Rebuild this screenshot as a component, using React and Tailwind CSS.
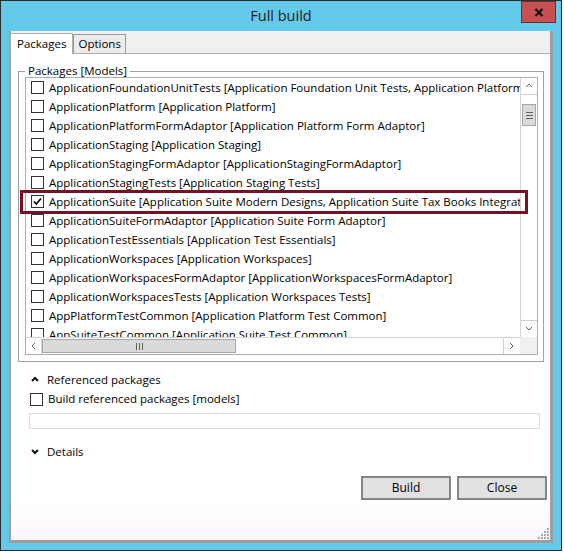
import React from 'react';

const packages = [
  ['ApplicationFoundationUnitTests', 'Application Foundation Unit Tests, Application Platform Foundation'],
  ['ApplicationPlatform', 'Application Platform'],
  ['ApplicationPlatformFormAdaptor', 'Application Platform Form Adaptor'],
  ['ApplicationStaging', 'Application Staging'],
  ['ApplicationStagingFormAdaptor', 'ApplicationStagingFormAdaptor'],
  ['ApplicationStagingTests', 'Application Staging Tests'],
  ['ApplicationSuite', 'Application Suite Modern Designs, Application Suite Tax Books Integration, Application Suite', true],
  ['ApplicationSuiteFormAdaptor', 'Application Suite Form Adaptor'],
  ['ApplicationTestEssentials', 'Application Test Essentials'],
  ['ApplicationWorkspaces', 'Application Workspaces'],
  ['ApplicationWorkspacesFormAdaptor', 'ApplicationWorkspacesFormAdaptor'],
  ['ApplicationWorkspacesTests', 'Application Workspaces Tests'],
  ['AppPlatformTestCommon', 'Application Platform Test Common'],
  ['AppSuiteTestCommon', 'Application Suite Test Common'],
];

function CheckBox({ checked }) {
  return (
    <span className="w-[13px] h-[13px] shrink-0 border border-[#333333] bg-white flex items-center justify-center">
      {checked && (
        <svg width="11" height="11" viewBox="0 0 11 11">
          <path d="M2 5.5 L4.3 8 L9 2.5" fill="none" stroke="#000" strokeWidth="1.7" />
        </svg>
      )}
    </span>
  );
}

function Chevron({ dir, color = '#606060', bold }) {
  const d = {
    up: 'M1 5 L4 2 L7 5',
    down: 'M1 2 L4 5 L7 2',
    left: 'M5 1 L2 4 L5 7',
    right: 'M2 1 L5 4 L2 7',
  }[dir];
  return (
    <svg width="8" height="8" viewBox="0 0 8 8">
      <path d={d} fill="none" stroke={color} strokeWidth={bold ? 2 : 1} />
    </svg>
  );
}

function VScroll() {
  return (
    <div className="flex flex-col bg-white border-l border-[#d4d4d4]">
      <div className="h-[17px] border-b border-[#cfcfcf] flex items-center justify-center">
        <Chevron dir="up" />
      </div>
      <div className="h-[9px]" />
      <div className="h-[22px] mx-[1px] bg-[#dadada] border border-[#a6a6a6] flex flex-col items-center justify-center gap-[2px]">
        <span className="w-[7px] h-px bg-[#606060]" />
        <span className="w-[7px] h-px bg-[#606060]" />
        <span className="w-[7px] h-px bg-[#606060]" />
      </div>
      <div className="flex-1" />
      <div className="h-[17px] border-t border-[#cfcfcf] flex items-center justify-center">
        <Chevron dir="down" />
      </div>
    </div>
  );
}

function HScroll() {
  return (
    <div className="flex bg-white border-t border-[#d4d4d4]">
      <div className="w-[16px] border-r border-[#cfcfcf] flex items-center justify-center">
        <Chevron dir="left" />
      </div>
      <div className="w-[194px] my-[1px] bg-[#dadada] border border-[#a6a6a6] flex items-center justify-center gap-[2px]">
        <span className="w-px h-[7px] bg-[#606060]" />
        <span className="w-px h-[7px] bg-[#606060]" />
        <span className="w-px h-[7px] bg-[#606060]" />
      </div>
      <div className="flex-1" />
      <div className="w-[17px] border-l border-[#cfcfcf] flex items-center justify-center">
        <Chevron dir="right" />
      </div>
    </div>
  );
}

export default function App() {
  return (
    <div className="relative w-[564px] h-[552px] bg-white overflow-hidden font-['Open_Sans',sans-serif] text-[11.5px] text-black">
      <div className="w-[562px] h-[551px] bg-[#65c9e9] border border-[#2b2b2b] flex flex-col">
        {/* title bar */}
        <div className="relative h-[30px] flex items-center justify-center">
          <span className="text-[14.5px] text-[#1e1e1e]">Full build</span>
          <div className="absolute top-0 right-[5px] w-[35px] h-[22px] bg-[#c75050] border border-[#6b2e2e] flex items-center justify-center">
            <svg width="10" height="9" viewBox="0 0 10 9">
              <path d="M1.5 1 L8.5 8 M8.5 1 L1.5 8" stroke="#111" strokeWidth="2.2" />
            </svg>
          </div>
        </div>

        {/* client area */}
        <div className="mx-[8px] h-[512px] border-l-2 border-r-[3px] border-b-[3px] border-[#9e9e9e] flex flex-col">
          <div className="h-[22px] bg-[#f0f0f0] flex items-end">
            <div className="relative z-10 h-[21px] -mb-px -ml-px px-[6px] bg-white border border-b-0 border-[#acacac] flex items-center">
              Packages
            </div>
            <div className="h-[19px] px-[4px] bg-[#ececec] border border-b-0 border-[#9a9a9a] flex items-center">
              Options
            </div>
          </div>

          <div className="relative flex-1 bg-white border-t border-[#acacac] flex flex-col">
            <fieldset className="mt-[11px] ml-[7px] w-[526px] border border-[#a0a0a0] pb-[6px] px-0">
              <legend className="ml-[6px] px-[3px] leading-[12px]">Packages [Models]</legend>
              <div className="ml-[6px] w-[513px] h-[278px] border border-[#abadb3] grid grid-cols-[494px_17px] grid-rows-[259px_17px]">
                <div className="overflow-hidden">
                  {packages.map(([name, desc, checked]) => (
                    <div key={name} className="h-[19px] flex items-center pl-[5px] gap-[5px] whitespace-nowrap">
                      <CheckBox checked={checked} />
                      <span>{name} [{desc}]</span>
                    </div>
                  ))}
                </div>
                <VScroll />
                <HScroll />
                <div className="bg-[#f0f0f0]" />
              </div>
            </fieldset>

            <div className="mt-[9px] h-[18px] flex items-center">
              <span className="ml-[20px] flex">
                <Chevron dir="up" color="#111" bold />
              </span>
              <span className="ml-[8px]">Referenced packages</span>
            </div>
            <div className="mt-px h-[18px] flex items-center ml-[19px] gap-[5px]">
              <CheckBox />
              <span>Build referenced packages [models]</span>
            </div>
            <div className="mt-[5px] ml-[18px] w-[511px] h-[16px] border border-[#dcdce4]" />

            <div className="mt-[14px] h-[18px] flex items-center">
              <span className="ml-[20px] flex">
                <Chevron dir="down" color="#111" bold />
              </span>
              <span className="ml-[8px]">Details</span>
            </div>

            <div className="mt-[15px] flex justify-end gap-[6px] pr-[3px]">
              <button className="w-[90px] h-[24px] bg-[#e1e1e1] border-2 border-[#858585] text-[12px] text-black">Build</button>
              <button className="w-[90px] h-[24px] bg-[#e1e1e1] border-2 border-[#858585] text-[12px] text-black">Close</button>
            </div>

            <div className="flex-1 bg-gradient-to-b from-white to-[#fcf6fc]" />

            {/* resize grip */}
            <svg className="absolute right-0 bottom-0" width="12" height="12" viewBox="0 0 12 12">
              {[[9, 0], [9, 3], [6, 3], [9, 6], [6, 6], [3, 6], [9, 9], [6, 9], [3, 9], [0, 9]].map(([x, y]) => (
                <rect key={`${x}-${y}`} x={x} y={y} width="2" height="2" fill="#a8a8a8" />
              ))}
            </svg>
          </div>
        </div>
      </div>

      {/* highlighted package */}
      <div className="absolute left-[20px] top-[190px] w-[508px] h-[24px] border-[3px] border-[#7a0f24]" />
    </div>
  );
}
